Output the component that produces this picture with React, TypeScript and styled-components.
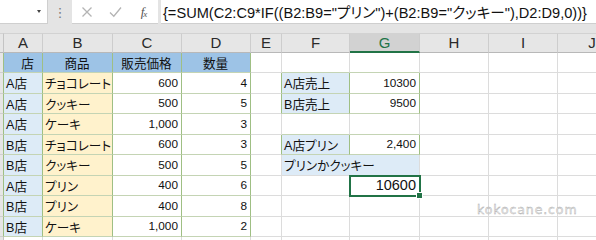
import React from "react"
import styled, { createGlobalStyle } from "styled-components"

const GRID = "#dcdcdc"
const GREEN_V = "#9fbf84"
const GREEN_H = "#c4d4b4"
const HEAD_BLUE = "#9dc3e6"
const LIGHT_BLUE = "#ddebf7"
const LIGHT_YELLOW = "#fff2cc"
const EXCEL_GREEN = "#217346"

const GlobalStyle = createGlobalStyle`
  html, body {
    margin: 0;
    padding: 0;
    background: #ffffff;
  }
  body {
    font-family: "Liberation Sans", "Noto Sans CJK JP", sans-serif;
  }
`

type Align = "left" | "right" | "center"

type CellSpec = {
  text?: string
  bg?: string
  align?: Align
  span?: number
  num?: boolean
  big?: boolean
  selected?: boolean
  shift?: number
}

const COLS = ["A", "B", "C", "D", "E", "F", "G", "H", "I", "J"]
const ROW_COUNT = 10

const tableRows = [
  ["A店", "チョコレート", "600", "4"],
  ["A店", "クッキー", "500", "5"],
  ["A店", "ケーキ", "1,000", "3"],
  ["B店", "チョコレート", "600", "3"],
  ["B店", "クッキー", "500", "5"],
  ["A店", "プリン", "400", "6"],
  ["B店", "プリン", "400", "8"],
  ["B店", "ケーキ", "1,000", "2"],
]

const buildSheet = () => {
  const sheet: Record<string, CellSpec> = {}
  const put = (r: number, c: number, spec: CellSpec) => {
    sheet[`${r},${c}`] = spec
  }
  put(1, 0, { text: "店", bg: HEAD_BLUE, align: "center", shift: 10 })
  put(1, 1, { text: "商品", bg: HEAD_BLUE, align: "center" })
  put(1, 2, { text: "販売価格", bg: HEAD_BLUE, align: "center" })
  put(1, 3, { text: "数量", bg: HEAD_BLUE, align: "center" })
  tableRows.forEach((row, i) => {
    const r = i + 2
    put(r, 0, { text: row[0], bg: LIGHT_BLUE })
    put(r, 1, { text: row[1], bg: LIGHT_YELLOW })
    put(r, 2, { text: row[2], align: "right", num: true })
    put(r, 3, { text: row[3], align: "right", num: true })
  })
  put(2, 5, { text: "A店売上", bg: LIGHT_BLUE })
  put(2, 6, { text: "10300", align: "right", num: true })
  put(3, 5, { text: "B店売上", bg: LIGHT_BLUE })
  put(3, 6, { text: "9500", align: "right", num: true })
  put(5, 5, { text: "A店プリン", bg: LIGHT_BLUE })
  put(5, 6, { text: "2,400", align: "right", num: true })
  put(6, 5, { text: "プリンかクッキー", bg: LIGHT_BLUE, span: 2 })
  put(7, 6, { text: "10600", align: "right", num: true, big: true, selected: true })
  return sheet
}

const isBoxed = (r: number, c: number) =>
  (r >= 1 && r <= 9 && c >= 0 && c <= 3) ||
  (r >= 2 && r <= 3 && c >= 5 && c <= 6) ||
  (r === 5 && c >= 5 && c <= 6)

const Window = styled.div`
  position: relative;
  width: 596px;
  height: 240px;
  overflow: hidden;
  background: #ffffff;
`

const TopArea = styled.div`
  height: 33px;
  background: #e4e4e4;
  display: flex;
  align-items: flex-start;
`

const NameBox = styled.div`
  width: 48px;
  height: 24px;
  background: #ffffff;
  border-bottom: 1px solid #cfcfcf;
  border-right: 1px solid #cfcfcf;
  box-sizing: border-box;
  display: flex;
  align-items: center;
  justify-content: flex-end;
  padding-right: 6px;
`

const Caret = styled.span`
  width: 0;
  height: 0;
  border-left: 2px solid transparent;
  border-right: 2px solid transparent;
  border-top: 3px solid #444;
`

const Dots = styled.div`
  width: 24px;
  height: 24px;
  display: flex;
  align-items: center;
  justify-content: center;
  color: #7a7a7a;
  font-size: 13px;
  font-family: "DejaVu Sans", sans-serif;
`

const ButtonBox = styled.div`
  width: 86px;
  height: 24px;
  background: #ffffff;
  border-bottom: 1px solid #cfcfcf;
  box-sizing: border-box;
  display: grid;
  grid-template-columns: 29px 28px 29px;
  align-items: center;
  justify-items: center;
`

const Fx = styled.span`
  font-family: "Liberation Serif", serif;
  font-style: italic;
  font-size: 13px;
  color: #555;
  letter-spacing: -1px;

  & > sub {
    font-size: 9px;
    vertical-align: -1px;
  }
`

const FormulaInput = styled.div`
  flex: 1;
  margin-left: 3px;
  height: 24px;
  background: #ffffff;
  border-bottom: 1px solid #cfcfcf;
  box-sizing: border-box;
  padding-left: 2px;
  display: flex;
  align-items: center;
  font-size: 14.6px;
  color: #111;
  white-space: nowrap;
  font-feature-settings: "palt";
`

const Sheet = styled.div`
  display: grid;
  grid-template-columns: 4px 39px 70px 69px 69px 31px 68px 70px 69px 69px 69px;
  grid-template-rows: 19.5px repeat(${ROW_COUNT}, 20.5px);
`

const Corner = styled.div`
  background: #e6e6e6;
  border-right: 1px solid #c4c4c4;
  border-bottom: 1px solid #b8b8b8;
  border-top: 1px solid #d2d2d2;
  box-sizing: border-box;
`

const ColHead = styled.div<{ $active?: boolean }>`
  background: ${(p) => (p.$active ? "#d2d2d2" : "#e6e6e6")};
  color: ${(p) => (p.$active ? EXCEL_GREEN : "#2a2a2a")};
  border-top: 1px solid #d2d2d2;
  border-right: 1px solid #cdcdcd;
  border-bottom: ${(p) => (p.$active ? `2px solid ${EXCEL_GREEN}` : "1px solid #b8b8b8")};
  box-sizing: border-box;
  display: flex;
  align-items: center;
  justify-content: center;
  font-size: 15px;
`

const RowHead = styled.div<{ $edge: string }>`
  background: #e6e6e6;
  border-right: 1px solid ${(p) => p.$edge};
  border-bottom: 1px solid #cfcfcf;
  box-sizing: border-box;
`

const Cell = styled.div<{
  $bg?: string
  $align?: Align
  $right: string
  $bottom: string
  $span?: number
  $num?: boolean
  $big?: boolean
  $selected?: boolean
  $shift?: number
}>`
  position: relative;
  z-index: ${(p) => (p.$selected ? 2 : 0)};
  grid-column: ${(p) => (p.$span ? `span ${p.$span}` : "auto")};
  background: ${(p) => p.$bg || "#ffffff"};
  border-right: 1px solid ${(p) => p.$right};
  border-bottom: 1px solid ${(p) => p.$bottom};
  box-sizing: border-box;
  display: flex;
  align-items: center;
  justify-content: ${(p) =>
    p.$align === "right" ? "flex-end" : p.$align === "center" ? "center" : "flex-start"};
  padding: 0 3px 0 ${(p) => 2 + (p.$shift || 0)}px;
  white-space: nowrap;
  color: #111;
  font-size: ${(p) => (p.$big ? "14.5px" : p.$num ? "11.8px" : "12.6px")};
  font-feature-settings: "palt";
  outline: ${(p) => (p.$selected ? `2px solid ${EXCEL_GREEN}` : "none")};
  outline-offset: -1px;
`

const FillHandle = styled.span`
  position: absolute;
  right: -4px;
  bottom: -4px;
  width: 5px;
  height: 5px;
  background: ${EXCEL_GREEN};
  border: 1px solid #ffffff;
`

const Watermark = styled.div`
  position: absolute;
  left: 477px;
  top: 202px;
  font-family: "DejaVu Sans", sans-serif;
  font-size: 12.5px;
  letter-spacing: 0.9px;
  color: #ececec;
  -webkit-text-stroke: 0.35px #a8a8a8;
`

const CrossIcon = () => (
  <svg width="12" height="12" viewBox="0 0 12 12">
    <path d="M1.5 1.5 L10.5 10.5 M10.5 1.5 L1.5 10.5" stroke="#b4b4b4" strokeWidth="1.3" fill="none" />
  </svg>
)

const CheckIcon = () => (
  <svg width="13" height="12" viewBox="0 0 13 12">
    <path d="M1 6.5 L4.8 10.2 L12 1.5" stroke="#b4b4b4" strokeWidth="1.3" fill="none" />
  </svg>
)

const FORMULA = '{=SUM(C2:C9*IF((B2:B9="プリン")+(B2:B9="クッキー"),D2:D9,0))}'

export default function App() {
  const sheet = buildSheet()
  const cells: React.ReactNode[] = []

  for (let r = 1; r <= ROW_COUNT; r++) {
    cells.push(
      <RowHead key={`rh${r}`} $edge={isBoxed(r, 0) ? GREEN_V : "#c4c4c4"} />,
    )
    for (let c = 0; c < COLS.length; c++) {
      const spec = sheet[`${r},${c}`] || {}
      const covered = sheet[`${r},${c - 1}`]?.span === 2
      if (covered) continue
      const lastCol = c + (spec.span || 1) - 1
      const right =
        isBoxed(r, lastCol) || isBoxed(r, lastCol + 1) ? GREEN_V : GRID
      const bottom = isBoxed(r, c) || isBoxed(r + 1, c) ? GREEN_H : GRID
      cells.push(
        <Cell
          key={`${r}-${c}`}
          $bg={spec.bg}
          $align={spec.align}
          $right={right}
          $bottom={bottom}
          $span={spec.span}
          $num={spec.num}
          $big={spec.big}
          $selected={spec.selected}
          $shift={spec.shift}
        >
          {spec.text}
          {spec.selected && <FillHandle />}
        </Cell>,
      )
    }
  }

  return (
    <Window>
      <GlobalStyle />
      <TopArea>
        <NameBox>
          <Caret />
        </NameBox>
        <Dots>⋮</Dots>
        <ButtonBox>
          <CrossIcon />
          <CheckIcon />
          <Fx>
            f<sub>x</sub>
          </Fx>
        </ButtonBox>
        <FormulaInput>{FORMULA}</FormulaInput>
      </TopArea>
      <Sheet>
        <Corner />
        {COLS.map((col) => (
          <ColHead key={col} $active={col === "G"}>
            {col}
          </ColHead>
        ))}
        {cells}
      </Sheet>
      <Watermark>kokocane.com</Watermark>
    </Window>
  )
}
